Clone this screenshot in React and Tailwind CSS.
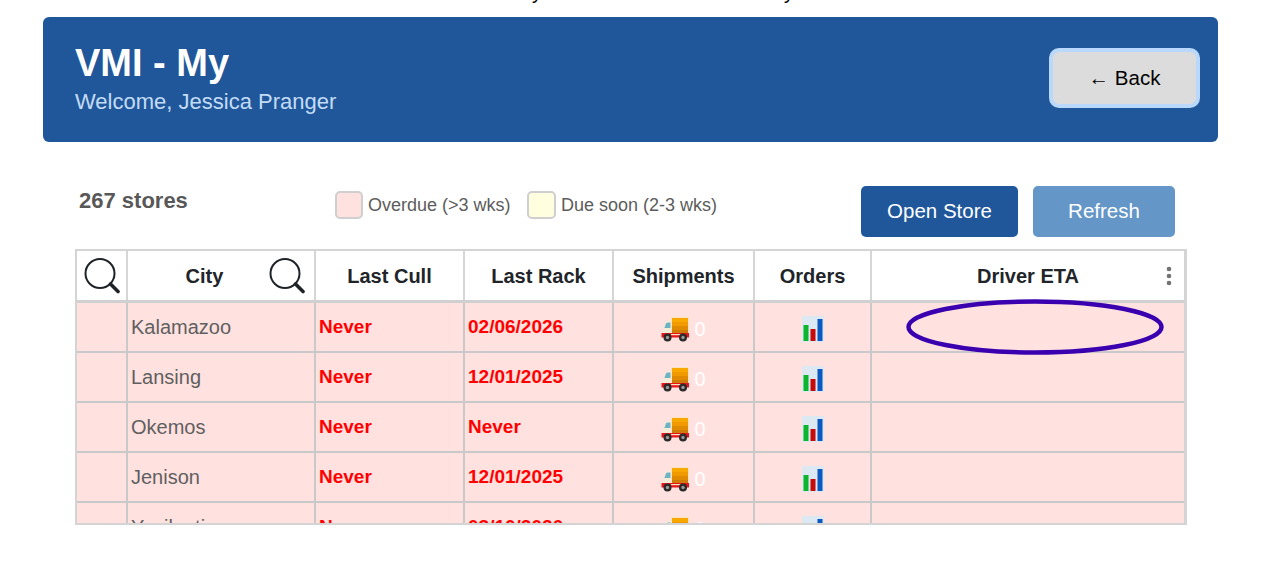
const rows = [
  { city: "Kalamazoo", cull: "Never", rack: "02/06/2026" },
  { city: "Lansing", cull: "Never", rack: "12/01/2025" },
  { city: "Okemos", cull: "Never", rack: "Never" },
  { city: "Jenison", cull: "Never", rack: "12/01/2025" },
  { city: "Ypsilanti", cull: "Never", rack: "03/10/2026" },
];

const colsClass =
  "grid grid-cols-[51px_188px_149px_149px_141px_117px_1fr]";

function SearchIcon() {
  return (
    <svg width="36" height="36" viewBox="0 0 36 36" fill="none" className="shrink-0">
      <circle cx="16" cy="15.5" r="14.5" stroke="#1f2328" strokeWidth="2" />
      <path d="M26.5 26 L34 33.5" stroke="#1f2328" strokeWidth="3.6" strokeLinecap="round" />
    </svg>
  );
}

function TruckIcon() {
  return (
    <svg width="28" height="26" viewBox="0 0 28 26" className="shrink-0">
      <path d="M2 13 L4 7 Q5 5 7 5 L11 5 L11 17 L1 17 Z" fill="#f4ecd8" />
      <path d="M3.4 12 L5 7.4 Q5.6 6.4 7 6.4 L9.5 6.4 L9.5 12 Z" fill="#6fb2c4" />
      <rect x="10" y="1" width="18" height="18" fill="#f7e3c0" />
      <rect x="11" y="2" width="16" height="4" fill="#f9a800" />
      <rect x="11" y="6" width="16" height="4" fill="#f09a00" />
      <rect x="11" y="10" width="16" height="4" fill="#e08a00" />
      <rect x="11" y="14" width="16" height="4" fill="#cf7c08" />
      <path d="M0.5 17 L28 17 L28 21.5 L0.5 21.5 Z" fill="#e8141c" />
      <rect x="10" y="18" width="10" height="1.2" fill="#f7e3c0" />
      <circle cx="6.5" cy="21.5" r="4" fill="#2a2a2a" />
      <circle cx="6.5" cy="21.5" r="1.7" fill="#9a9a9a" />
      <circle cx="22" cy="21.5" r="4" fill="#2a2a2a" />
      <circle cx="22" cy="21.5" r="1.7" fill="#9a9a9a" />
    </svg>
  );
}

function ChartIcon() {
  return (
    <svg width="22" height="26" viewBox="0 0 22 26">
      <rect x="0" y="0" width="22" height="26" fill="#dce8f2" />
      <rect x="1.5" y="9" width="5" height="16" fill="#0cb52c" />
      <rect x="8.5" y="13" width="5" height="12" fill="#c80a0a" />
      <rect x="15.5" y="3" width="5" height="22" fill="#0a58c0" />
    </svg>
  );
}

function KebabIcon() {
  return (
    <svg width="6" height="20" viewBox="0 0 6 20" className="justify-self-end mr-[12px]">
      <circle cx="3" cy="3" r="2.3" fill="#737373" />
      <circle cx="3" cy="10" r="2.3" fill="#737373" />
      <circle cx="3" cy="17" r="2.3" fill="#737373" />
    </svg>
  );
}

function StoreRow({ row }) {
  const cell = "border-r-2 border-[#c9c9c9] flex items-center";
  return (
    <div className={`${colsClass} h-[50px] shrink-0 border-b-2 border-[#c9c9c9] bg-[#ffe1df]`}>
      <div className={cell} />
      <div className={`${cell} pl-[3px] text-[20px] text-[#5f5f5f]`}>{row.city}</div>
      <div className={`${cell} pl-[3px] text-[19px] font-bold text-[#ff0000]`}>{row.cull}</div>
      <div className={`${cell} pl-[3px] text-[19px] font-bold text-[#ff0000]`}>{row.rack}</div>
      <div className={`${cell} justify-center gap-[5px] text-[20px] text-white pt-[3px]`}>
        <TruckIcon />
        <span>0</span>
      </div>
      <div className={`${cell} justify-center pt-[3px]`}>
        <ChartIcon />
      </div>
      <div />
    </div>
  );
}

export default function App() {
  const head = "border-r-2 border-[#d6d6d6] flex items-center justify-center";
  return (
    <div className="w-[1281px] h-[562px] overflow-hidden bg-white font-['Liberation_Sans',Arial,sans-serif]">
      <div className="h-[17px] overflow-hidden">
        <div className="flex -mt-[19px] pl-[532px] gap-[242px] text-[20px] leading-[23px] text-black">
          <span>y</span>
          <span>y</span>
        </div>
      </div>

      <header className="mx-[43px] w-[1175px] h-[125px] rounded-[6px] bg-[#20579b] flex items-center justify-between pl-[32px] pr-[18px]">
        <div className="-mt-[3px]">
          <h1 className="text-[38px] leading-[44px] font-bold text-white">VMI - My</h1>
          <p className="text-[22px] leading-[26px] mt-[4px] text-[#c3dcf6]">Welcome, Jessica Pranger</p>
        </div>
        <button className="w-[151px] h-[60px] -mt-[3px] rounded-[10px] border-4 border-[#b9d8fb] bg-[#dcdcdc] text-[20.5px] text-black">
          ← Back
        </button>
      </header>

      <div className="flex items-start h-[107px] pt-[44px] pl-[79px]">
        <div className="w-[256px] pt-[1px] text-[22px] leading-[28px] font-bold text-[#585858]">267 stores</div>
        <div className="flex items-center gap-[5px] w-[192px] pt-[5px] text-[18px] text-[#5c5c5c]">
          <span className="w-[28px] h-[28px] rounded-[5px] border-2 border-[#cfcfcf] bg-[#ffe1df]" />
          Overdue (&gt;3 wks)
        </div>
        <div className="flex items-center gap-[5px] w-[334px] pt-[5px] text-[18px] text-[#5c5c5c]">
          <span className="w-[29px] h-[28px] rounded-[5px] border-2 border-[#cfcfcf] bg-[#ffffe0]" />
          Due soon (2-3 wks)
        </div>
        <button className="w-[157px] h-[51px] rounded-[5px] bg-[#20579b] text-[20.5px] text-white">Open Store</button>
        <button className="w-[142px] h-[51px] ml-[15px] rounded-[5px] bg-[#6496c8] text-[20.5px] text-white">Refresh</button>
      </div>

      <div className="relative ml-[75px] w-[1112px]">
        <div className="h-[276px] overflow-hidden flex flex-col border-2 border-r-[3px] border-[#d4d4d4]">
          <div className={`${colsClass} h-[52px] shrink-0 border-b-[3px] border-[#d0d0d0] bg-white text-[20px] font-bold text-[#212529]`}>
            <div className={head}>
              <SearchIcon />
            </div>
            <div className={`${head} pl-[12px] pr-[9px]`}>
              <span className="flex-1 text-center">City</span>
              <SearchIcon />
            </div>
            <div className={head}>Last Cull</div>
            <div className={head}>Last Rack</div>
            <div className={head}>Shipments</div>
            <div className={head}>Orders</div>
            <div className="grid grid-cols-[1fr_auto_1fr] items-center">
              <span />
              <span>Driver ETA</span>
              <KebabIcon />
            </div>
          </div>
          {rows.map((row) => (
            <StoreRow key={row.city} row={row} />
          ))}
        </div>

        <svg width="262" height="60" viewBox="0 0 262 60" fill="none" className="absolute left-[829px] top-[49px]">
          <ellipse cx="131" cy="29" rx="126.5" ry="25.5" stroke="#3a00b0" strokeWidth="4.5" />
        </svg>
      </div>
    </div>
  );
}
